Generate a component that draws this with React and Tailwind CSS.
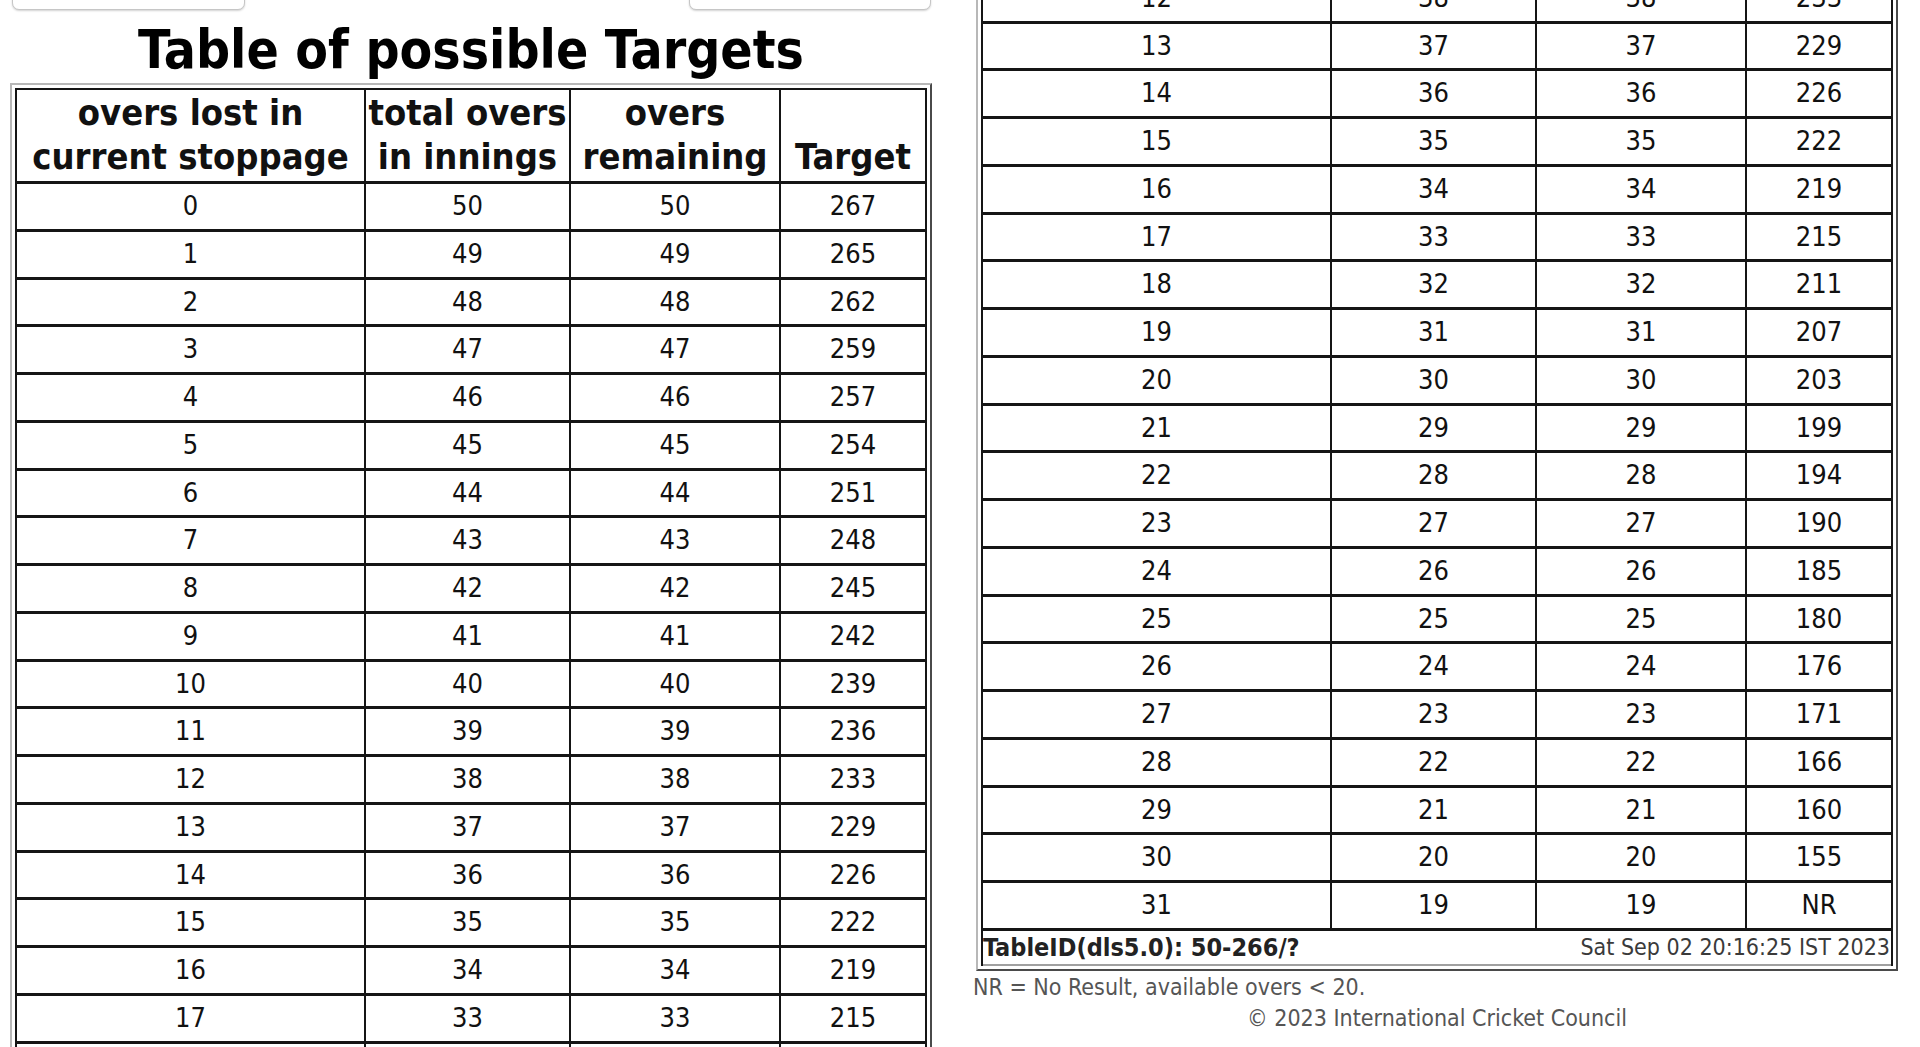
import React from "react";

const TARGETS = [267, 265, 262, 259, 257, 254, 251, 248, 245, 242, 239, 236, 233, 229, 226, 222, 219, 215, 211, 207, 203, 199, 194, 190, 185, 180, 176, 171, 166, 160, 155, "NR"];

const COLS = [
  "w-[349px] border-r-2",
  "w-[205px] border-r-2",
  "w-[210px] border-r-2",
  "w-[144px]",
];

const HEAD = ["overs lost in\ncurrent stoppage", "total overs\nin innings", "overs\nremaining", "Target"];

function Row({ k, empty = false }) {
  const vals = empty ? ["", "", "", ""] : [k, 50 - k, 50 - k, TARGETS[k]];
  return (
    <div className="flex h-[47.75px] shrink-0 border-b-[3px] border-[#151515]">
      {vals.map((v, i) => (
        <div
          key={i}
          className={`${COLS[i]} flex items-center justify-center border-[#151515] text-[27px] text-[#111]`}
        >
          {v}
        </div>
      ))}
    </div>
  );
}

function Header() {
  return (
    <div className="flex h-[94px] shrink-0 border-b-[3px] border-[#151515]">
      {HEAD.map((h, i) => (
        <div
          key={i}
          className={`${COLS[i]} flex items-end justify-center whitespace-pre-line border-[#151515] pb-[2px] text-center text-[36px] font-bold leading-[44px] text-[#111]`}
        >
          {h}
        </div>
      ))}
    </div>
  );
}

function Wrapper({ className = "", children }) {
  return (
    <div
      className={`w-[922px] shrink-0 border-2 border-t-[#b8b8b8] border-l-[#b8b8b8] border-r-[#4a4a4a] border-b-[#4a4a4a] bg-white p-[3px] ${className}`}
    >
      {children}
    </div>
  );
}

function Button({ w }) {
  return (
    <div
      className={`${w} -mt-[30px] h-[40px] rounded-[7px] border border-[#c6c6c6] bg-white shadow-[0_1px_2px_rgba(0,0,0,0.18)]`}
    />
  );
}

export default function App() {
  const left = Array.from({ length: 18 }, (_, i) => i);
  const right = Array.from({ length: 20 }, (_, i) => i + 12);
  return (
    <div className="flex h-[1047px] w-[1920px] overflow-hidden bg-white font-['DejaVu_Sans_Condensed','Liberation_Sans',sans-serif] text-black">
      {/* Left column */}
      <div className="ml-[10px] flex w-[922px] shrink-0 flex-col">
        <div className="flex justify-between pl-[2px] pr-[1px]">
          <Button w="w-[233px]" />
          <Button w="w-[242px]" />
        </div>
        <h1 className="mt-[14px] text-center text-[53px] font-bold leading-[52px] text-black">
          Table of possible Targets
        </h1>
        <Wrapper className="mt-[7px]">
          <div className="flex flex-col border-x-2 border-t-2 border-[#151515]">
            <Header />
            {left.map((k) => (
              <Row key={k} k={k} />
            ))}
            <Row k={18} empty />
          </div>
        </Wrapper>
      </div>

      {/* Right column */}
      <div className="ml-[41px] flex w-[925px] shrink-0 flex-col">
        <Wrapper className="-mt-[31.25px] ml-[3px]">
          <div className="flex flex-col border-x-2 border-t-2 border-[#151515]">
            {right.map((k) => (
              <Row key={k} k={k} />
            ))}
            <div className="flex h-[35px] items-center justify-between border-b-2 border-[#a0a0a0] pr-[1px] leading-[33px]">
              <span className="text-[25px] font-bold text-[#222]">TableID(dls5.0): 50-266/?</span>
              <span className="text-[23px] text-[#3a3a3a]">Sat Sep 02 20:16:25 IST 2023</span>
            </div>
          </div>
        </Wrapper>
        <p className="text-[23px] leading-[32px] text-[#555]">NR = No Result, available overs &lt; 20.</p>
        <p className="ml-[3px] w-[922px] text-center text-[23px] leading-[30px] text-[#555]">
          © 2023 International Cricket Council
        </p>
      </div>
    </div>
  );
}
